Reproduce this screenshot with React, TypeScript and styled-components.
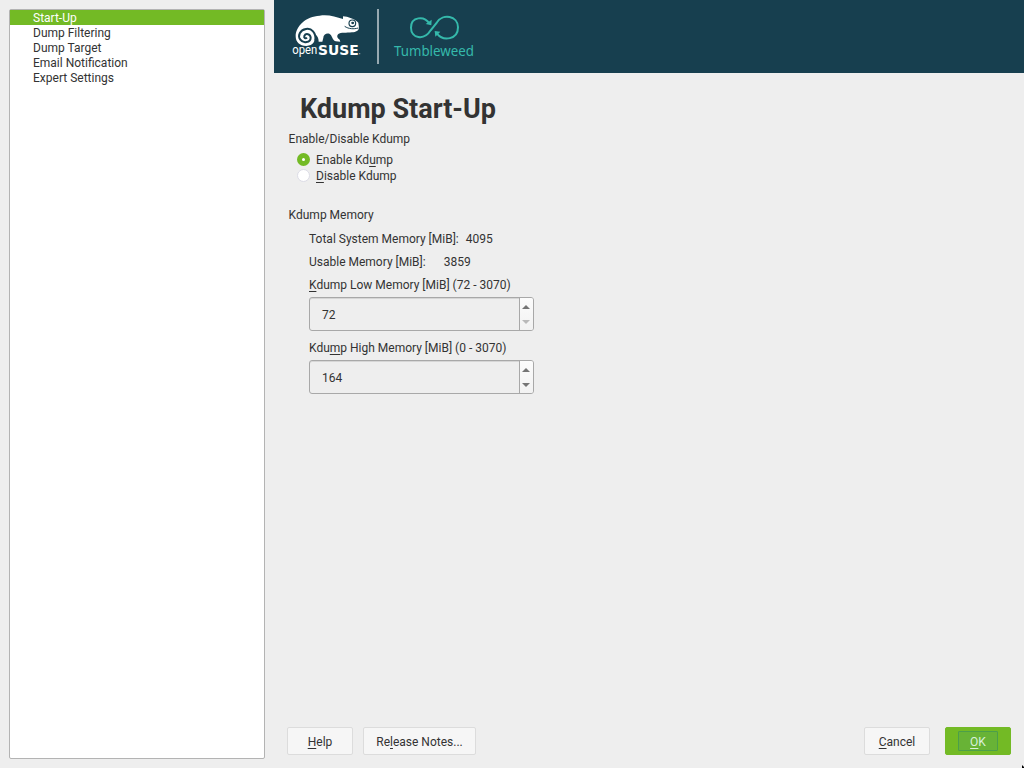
import React from 'react';
import styled, { createGlobalStyle } from 'styled-components';

const Global = createGlobalStyle`
  * { box-sizing: border-box; }
  body {
    margin: 0;
    background: #eee;
    color: #333;
    font: 12px/15px Roboto, "Liberation Sans", sans-serif;
    overflow: hidden;
  }
`;

const Window = styled.div`
  display: flex;
  width: 1024px;
  height: 768px;
  background: #eee;
`;

const Sidebar = styled.ul`
  list-style: none;
  width: 256px;
  height: 750px;
  margin: 9px 9px 0;
  padding: 0;
  background: #fff;
  border: 1px solid #b3b3b3;
  border-radius: 2px;
`;

const SidebarItem = styled.li<{ $active?: boolean }>`
  height: 15px;
  padding-left: 23px;
  line-height: 16px;
  color: ${p => (p.$active ? '#fff' : '#333')};
  background: ${p => (p.$active ? '#73ba25' : 'transparent')};
`;

const Main = styled.main`
  display: flex;
  flex-direction: column;
  width: 750px;
`;

const Banner = styled.header`
  height: 73px;
  background: #173f4f;
`;

const BannerArt = styled.svg`
  display: block;
`;

const Content = styled.section`
  flex: 1;
  padding: 20px 0 0 15px;
`;

const Title = styled.h1`
  margin: 0 0 7px 11px;
  font-size: 27px;
  line-height: 32px;
  font-weight: 700;
`;

const GroupTitle = styled.div`
  height: 15px;
  margin-left: -0.4px;
`;

const RadioList = styled.div`
  padding: 5px 0 0 8px;
  margin-bottom: 24px;
`;

const RadioRow = styled.label`
  display: flex;
  align-items: flex-start;
  gap: 6px;
  height: 16px;
  line-height: 16px;
`;

const RadioMark = styled.span<{ $on?: boolean }>`
  width: 13px;
  height: 13px;
  margin-top: 1px;
  border-radius: 50%;
  border: ${p => (p.$on ? '5px solid #73ba25' : '1px solid #dcdce6')};
  background: #fff;
`;

const Key = styled.span`
  text-decoration: underline;
  text-decoration-thickness: 1px;
  text-underline-offset: 2px;
  text-decoration-skip-ink: none;
`;

const Fields = styled.div`
  padding: 9px 0 0 20px;
`;

const InfoRow = styled.div<{ $gap: number }>`
  display: flex;
  gap: ${p => p.$gap}px;
  height: 23px;
`;

const FieldLabel = styled.div`
  height: 15px;
  margin-bottom: 4px;
`;

const SpinBox = styled.div`
  display: flex;
  width: 225px;
  height: 34px;
  margin-bottom: 10px;
  border: 1px solid #a8a8a8;
  border-radius: 3px;
  overflow: hidden;
  box-shadow: inset 0 1px 0 #d6d6d6;
`;

const SpinValue = styled.div`
  flex: 1;
  padding-left: 12px;
  line-height: 34px;
`;

const SpinButtons = styled.div`
  width: 14px;
  display: flex;
  flex-direction: column;
  justify-content: space-between;
  align-items: flex-start;
  padding: 7px 0 6px 2px;
  border-left: 1px solid #a8a8a8;
  background: linear-gradient(#fcfcfc, #f2f2f2);
`;

const Arrow = styled.span<{ $down?: boolean; $dim?: boolean }>`
  width: 8px;
  height: 4px;
  background: ${p => (p.$dim ? '#b9b9b9' : '#757575')};
  clip-path: ${p => (p.$down ? 'polygon(0 0, 100% 0, 50% 100%)' : 'polygon(50% 0, 100% 100%, 0 100%)')};
`;

const Footer = styled.footer`
  display: flex;
  height: 41px;
  padding: 0 13px;
`;

const Spacer = styled.div`
  flex: 1;
`;

const Button = styled.button<{ $w: number; $gap?: number; $primary?: boolean }>`
  display: flex;
  align-items: center;
  justify-content: center;
  width: ${p => p.$w}px;
  height: 28px;
  margin: 0 ${p => p.$gap ?? 0}px 0 0;
  padding: ${p => (p.$primary ? '0' : '2px 0 0')};
  border: 1px solid ${p => (p.$primary ? '#73ba25' : '#dcdcdc')};
  border-radius: 2px;
  background: ${p => (p.$primary ? '#73ba25' : '#f6f6f6')};
  color: ${p => (p.$primary ? '#d9f0dc' : '#333')};
  font: inherit;
`;

const FocusFrame = styled.span`
  width: 40px;
  height: 20px;
  padding-top: 1px;
  line-height: 18px;
  border: 1px solid #4c9f4a;
  border-radius: 1px;
  background: #68b336;
`;

const Pointer = styled.svg`
  position: absolute;
  left: 1022px;
  top: 765px;
`;

const pages = ['Start-Up', 'Dump Filtering', 'Dump Target', 'Email Notification', 'Expert Settings'];

function Logo() {
  return (
    <BannerArt width="220" height="73" viewBox="0 0 660 219">
      <path
        fill="#fff"
        d="M65 109C65 78 96 49 137 47C162 42 185 51 207 57L207 49C222 50 242 57 253 68L255 83C254 92 246 96 234 97C217 99 200 97 193 102C187 107 190 115 197 119L199 125L185 124C174 120 175 105 166 101C157 98 148 104 148 113L145 125L134 125C134 117 132 110 124 103C124 125 118 137 97 138C77 138 65 126 65 109Z"
      />
      <path
        fill="none"
        stroke="#173f4f"
        strokeWidth="6"
        d="M124 122C127 97 112 84 96 87C78 90 70 107 79 119C88 132 110 127 110 113C109 101 95 99 91 108C89 114 95 117 99 113"
      />
      <circle cx="235" cy="70" r="10" fill="#fff" stroke="#173f4f" strokeWidth="3.5" />
      <ellipse cx="236" cy="69" rx="4.5" ry="3.5" fill="#173f4f" />
      <path d="M212 79C224 87 239 88 253 84" fill="none" stroke="#173f4f" strokeWidth="3" />
      <text x="55" y="163" fill="#fff" fontFamily="Roboto, sans-serif" fontSize="36" textLength="75" lengthAdjust="spacingAndGlyphs">open</text>
      <text x="132" y="164" fill="#fff" fontFamily="DejaVu Sans, sans-serif" fontWeight="700" fontSize="41" textLength="122" lengthAdjust="spacingAndGlyphs">SUSE</text>
      <circle cx="257" cy="161" r="2" fill="#a2b2b9" />
      <rect x="309" y="27" width="6" height="165" fill="#97a9b1" />
      <path
        fill="none"
        stroke="#35b9ab"
        strokeWidth="6"
        d="M466 70C451 47 411 49 411 83C411 115 450 123 470 91L489 67C506 40 552 47 552 82C552 119 508 125 489 101"
      />
      <path fill="#35b9ab" d="M473 59L472 76L455 72ZM482 93L499 95L484 110Z" />
      <text x="360" y="168" fill="#35b9ab" fontFamily="Noto Sans, sans-serif" fontSize="42" textLength="240" lengthAdjust="spacingAndGlyphs">Tumbleweed</text>
    </BannerArt>
  );
}

function NumberField({ label, value, atMinimum }: { label: React.ReactNode; value: number; atMinimum?: boolean }) {
  return (
    <>
      <FieldLabel>{label}</FieldLabel>
      <SpinBox>
        <SpinValue>{value}</SpinValue>
        <SpinButtons>
          <Arrow />
          <Arrow $down $dim={atMinimum} />
        </SpinButtons>
      </SpinBox>
    </>
  );
}

export default function App() {
  return (
    <Window>
      <Global />
      <Sidebar>
        {pages.map((name, i) => (
          <SidebarItem key={name} $active={i === 0}>{name}</SidebarItem>
        ))}
      </Sidebar>
      <Main>
        <Banner><Logo /></Banner>
        <Content>
          <Title>Kdump Start-Up</Title>
          <GroupTitle>Enable/Disable Kdump</GroupTitle>
          <RadioList>
            <RadioRow><RadioMark $on /><span>Enable Kd<Key>u</Key>mp</span></RadioRow>
            <RadioRow><RadioMark /><span><Key>D</Key>isable Kdump</span></RadioRow>
          </RadioList>
          <GroupTitle>Kdump Memory</GroupTitle>
          <Fields>
            <InfoRow $gap={7}><span>Total System Memory [MiB]:</span><span>4095</span></InfoRow>
            <InfoRow $gap={18}><span>Usable Memory [MiB]:</span><span>3859</span></InfoRow>
            <NumberField label={<><Key>K</Key>dump Low Memory [MiB] (72 - 3070)</>} value={72} atMinimum />
            <NumberField label={<>Kdu<Key>m</Key>p High Memory [MiB] (0 - 3070)</>} value={164} />
          </Fields>
        </Content>
        <Footer>
          <Button $w={66} $gap={10}><span><Key>H</Key>elp</span></Button>
          <Button $w={113}><span>Re<Key>l</Key>ease Notes...</span></Button>
          <Spacer />
          <Button $w={66} $gap={15}><span><Key>C</Key>ancel</span></Button>
          <Button $w={66} $primary><FocusFrame><Key>O</Key>K</FocusFrame></Button>
        </Footer>
      </Main>
      <Pointer width="2" height="3" viewBox="0 0 2 3"><path d="M0 0L2 2V3H0Z" fill="#000" /></Pointer>
    </Window>
  );
}
